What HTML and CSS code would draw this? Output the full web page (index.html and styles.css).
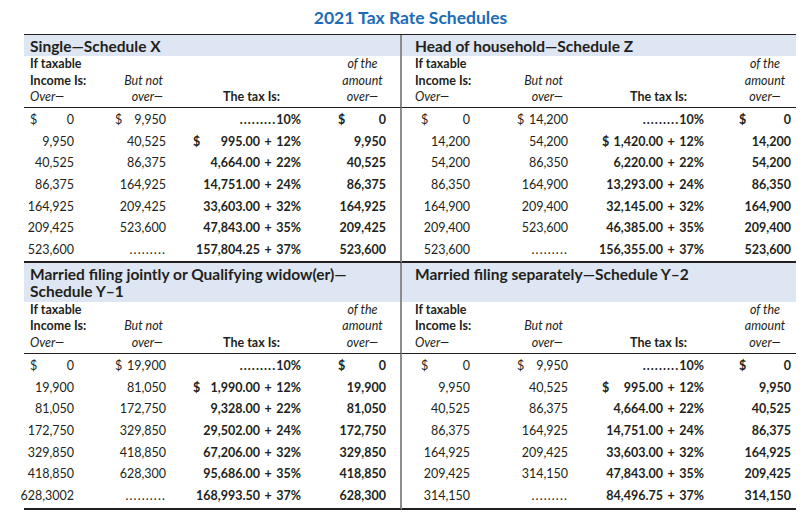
FILE: index.html
```html
<!DOCTYPE html>
<html lang="en">
<head>
<meta charset="utf-8">
<title>2021 Tax Rate Schedules</title>
<link rel="stylesheet" href="styles.css">
</head>
<body>
<h1 class="title">2021 Tax Rate Schedules</h1>
<div class="sheet">
  <div class="band l">Single—Schedule X</div>
  <div class="band r">Head of household—Schedule Z</div>

  <div class="head l">
    <div class="h1">If taxable<br>Income Is:<br><i>Over—</i></div>
    <div class="h2"><i>But not<br>over—</i></div>
    <div class="h3">The tax Is:</div>
    <div class="h4"><i>of the<br>amount<br>over—</i></div>
  </div>
  <div class="head r">
    <div class="h1">If taxable<br>Income Is:<br><i>Over—</i></div>
    <div class="h2"><i>But not<br>over—</i></div>
    <div class="h3">The tax Is:</div>
    <div class="h4"><i>of the<br>amount<br>over—</i></div>
  </div>

  <div class="body l">
    <div class="row"><span class="c1 d"><span>$</span><span>0</span></span><span class="c2">$ &#8199;9,950</span><span class="c3"><span class="dots">.........</span>10%</span><span class="c4 d"><span>$</span><span>0</span></span></div>
    <div class="row"><span class="c1">9,950</span><span class="c2">40,525</span><span class="c3 d"><span>$</span><span>995.00 + 12%</span></span><span class="c4">9,950</span></div>
    <div class="row"><span class="c1">40,525</span><span class="c2">86,375</span><span class="c3">4,664.00 + 22%</span><span class="c4">40,525</span></div>
    <div class="row"><span class="c1">86,375</span><span class="c2">164,925</span><span class="c3">14,751.00 + 24%</span><span class="c4">86,375</span></div>
    <div class="row"><span class="c1">164,925</span><span class="c2">209,425</span><span class="c3">33,603.00 + 32%</span><span class="c4">164,925</span></div>
    <div class="row"><span class="c1">209,425</span><span class="c2">523,600</span><span class="c3">47,843.00 + 35%</span><span class="c4">209,425</span></div>
    <div class="row"><span class="c1">523,600</span><span class="c2 dots">.........</span><span class="c3">157,804.25 + 37%</span><span class="c4">523,600</span></div>
  </div>
  <div class="body r">
    <div class="row"><span class="c1 d"><span>$</span><span>0</span></span><span class="c2">$ 14,200</span><span class="c3"><span class="dots">.........</span>10%</span><span class="c4 d"><span>$</span><span>0</span></span></div>
    <div class="row"><span class="c1">14,200</span><span class="c2">54,200</span><span class="c3 d"><span>$</span><span>1,420.00 + 12%</span></span><span class="c4">14,200</span></div>
    <div class="row"><span class="c1">54,200</span><span class="c2">86,350</span><span class="c3">6,220.00 + 22%</span><span class="c4">54,200</span></div>
    <div class="row"><span class="c1">86,350</span><span class="c2">164,900</span><span class="c3">13,293.00 + 24%</span><span class="c4">86,350</span></div>
    <div class="row"><span class="c1">164,900</span><span class="c2">209,400</span><span class="c3">32,145.00 + 32%</span><span class="c4">164,900</span></div>
    <div class="row"><span class="c1">209,400</span><span class="c2">523,600</span><span class="c3">46,385.00 + 35%</span><span class="c4">209,400</span></div>
    <div class="row"><span class="c1">523,600</span><span class="c2 dots">.........</span><span class="c3">156,355.00 + 37%</span><span class="c4">523,600</span></div>
  </div>

  <div class="band l sep">Married filing jointly or Qualifying widow(er)—<br>Schedule Y–1</div>
  <div class="band r sep">Married filing separately—Schedule Y–2</div>

  <div class="head l">
    <div class="h1">If taxable<br>Income Is:<br><i>Over—</i></div>
    <div class="h2"><i>But not<br>over—</i></div>
    <div class="h3">The tax Is:</div>
    <div class="h4"><i>of the<br>amount<br>over—</i></div>
  </div>
  <div class="head r">
    <div class="h1">If taxable<br>Income Is:<br><i>Over—</i></div>
    <div class="h2"><i>But not<br>over—</i></div>
    <div class="h3">The tax Is:</div>
    <div class="h4"><i>of the<br>amount<br>over—</i></div>
  </div>

  <div class="body l last">
    <div class="row"><span class="c1 d"><span>$</span><span>0</span></span><span class="c2">$ 19,900</span><span class="c3"><span class="dots">.........</span>10%</span><span class="c4 d"><span>$</span><span>0</span></span></div>
    <div class="row"><span class="c1">19,900</span><span class="c2">81,050</span><span class="c3 d"><span>$</span><span>1,990.00 + 12%</span></span><span class="c4">19,900</span></div>
    <div class="row"><span class="c1">81,050</span><span class="c2">172,750</span><span class="c3">9,328.00 + 22%</span><span class="c4">81,050</span></div>
    <div class="row"><span class="c1">172,750</span><span class="c2">329,850</span><span class="c3">29,502.00 + 24%</span><span class="c4">172,750</span></div>
    <div class="row"><span class="c1">329,850</span><span class="c2">418,850</span><span class="c3">67,206.00 + 32%</span><span class="c4">329,850</span></div>
    <div class="row"><span class="c1">418,850</span><span class="c2">628,300</span><span class="c3">95,686.00 + 35%</span><span class="c4">418,850</span></div>
    <div class="row"><span class="c1">628,3002</span><span class="c2 dots">..........</span><span class="c3">168,993.50 + 37%</span><span class="c4">628,300</span></div>
  </div>
  <div class="body r last">
    <div class="row"><span class="c1 d"><span>$</span><span>0</span></span><span class="c2">$ &#8199;9,950</span><span class="c3"><span class="dots">.........</span>10%</span><span class="c4 d"><span>$</span><span>0</span></span></div>
    <div class="row"><span class="c1">9,950</span><span class="c2">40,525</span><span class="c3 d"><span>$</span><span>995.00 + 12%</span></span><span class="c4">9,950</span></div>
    <div class="row"><span class="c1">40,525</span><span class="c2">86,375</span><span class="c3">4,664.00 + 22%</span><span class="c4">40,525</span></div>
    <div class="row"><span class="c1">86,375</span><span class="c2">164,925</span><span class="c3">14,751.00 + 24%</span><span class="c4">86,375</span></div>
    <div class="row"><span class="c1">164,925</span><span class="c2">209,425</span><span class="c3">33,603.00 + 32%</span><span class="c4">164,925</span></div>
    <div class="row"><span class="c1">209,425</span><span class="c2">314,150</span><span class="c3">47,843.00 + 35%</span><span class="c4">209,425</span></div>
    <div class="row"><span class="c1">314,150</span><span class="c2 dots">.........</span><span class="c3">84,496.75 + 37%</span><span class="c4">314,150</span></div>
  </div>
</div>
</body>
</html>
```

FILE: styles.css
```css
html, body {
  margin: 0;
  padding: 0;
  background: #ffffff;
}
body {
  font-family: Lato, "Open Sans", sans-serif;
  color: #231f20;
}
.title {
  margin: 0;
  height: 34px;
  line-height: 36px;
  text-align: center;
  font-size: 17.5px;
  font-weight: 700;
  color: #1c6cb8;
  padding-left: 12px;
  box-sizing: border-box;
}
.sheet {
  margin-left: 24px;
  width: 772px;
  display: grid;
  grid-template-columns: 378px 394px;
  border-top: 1.5px solid #231f20;
}
.l {
  border-right: 2px solid #8c8c8c;
  --cols: 44px 92px 135px 85px;
  --pl: 6px;
  --pr: 14px;
  --h2r: 3px;
  --h3r: 21px;
  --h4l: 38px;
  --d1: 0px;
  --d3: 27px;
  --d4: 37px;
}
.r {
  --cols: 55px 98px 136px 87px;
  --pl: 13px;
  --pr: 5px;
  --h2r: 5px;
  --h3r: 17px;
  --h4l: 35px;
  --d1: 6px;
  --d3: 34px;
  --d4: 35px;
}
.band {
  background: #dde6f2;
  font-size: 15.5px;
  font-weight: 700;
  line-height: 17px;
  padding: 3px var(--pr) 1px var(--pl);
  white-space: nowrap;
}
.band.sep {
  padding-bottom: 2px;
}
.head {
  display: grid;
  grid-template-columns: var(--cols);
  align-items: end;
  padding: 0 var(--pr) 1.5px var(--pl);
  border-bottom: 1px solid #231f20;
  font-size: 12.5px;
  line-height: 16.5px;
  white-space: nowrap;
}
.head i {
  font-style: italic;
  font-weight: 400;
}
.h1 {
  font-weight: 700;
}
.h2 {
  text-align: right;
  padding-right: var(--h2r);
}
.h3 {
  font-weight: 700;
  text-align: right;
  padding-right: var(--h3r);
}
.h4 {
  text-align: center;
  padding-left: var(--h4l);
}
.body {
  padding: 1px var(--pr) 0 var(--pl);
  border-bottom: 2px solid #231f20;
}
.body.last {
  padding-bottom: 1px;
}
.row {
  display: grid;
  grid-template-columns: var(--cols);
  height: 21.7px;
  line-height: 21.7px;
  font-size: 12.5px;
  word-spacing: 1.5px;
  white-space: nowrap;
}
.row > span {
  text-align: right;
}
.row .c1, .row .c2 {
  font-weight: 400;
}
.row .c3, .row .c4 {
  font-weight: 700;
}
.row .c1 {
  direction: rtl;
}
.row .c1.d {
  direction: ltr;
}
.dots {
  letter-spacing: 1.1px;
}
.d {
  display: flex;
  justify-content: space-between;
}
.c1.d {
  padding-left: var(--d1);
}
.c3.d {
  padding-left: var(--d3);
}
.c4.d {
  padding-left: var(--d4);
}
```
